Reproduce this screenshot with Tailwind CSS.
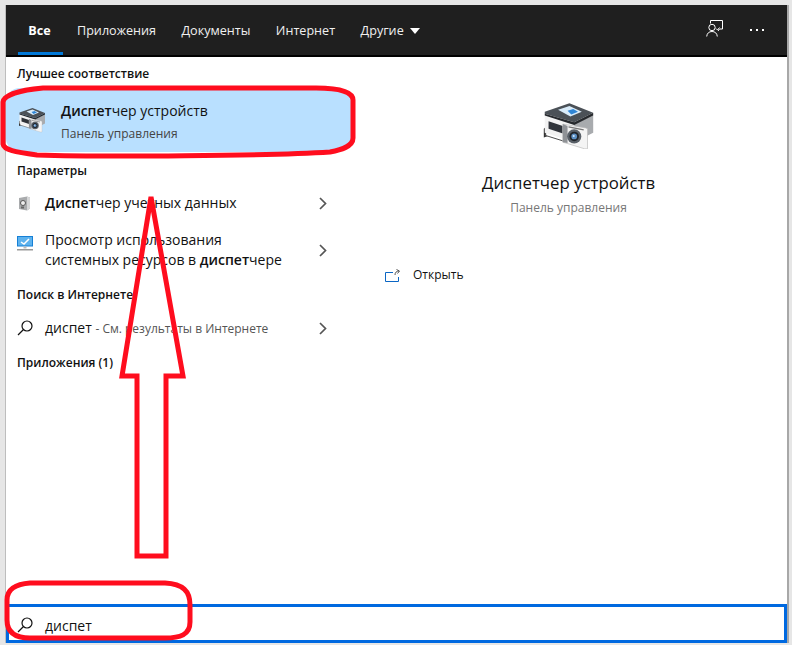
<!DOCTYPE html>
<html lang="ru"><head><meta charset="utf-8">
<script src="https://cdn.jsdelivr.net/npm/@tailwindcss/browser@4"></script>
</head>
<body class="m-0 bg-[#e6e6e6] font-['Open_Sans','Noto_Sans',sans-serif] text-[#111]">
<svg class="hidden"><defs>
<symbol id="dev" viewBox="0 0 60 48">
<path d="M4 27 L13 19 L13 33 L4 36 Z" fill="#333"/>
<path d="M6 28 L6 34 L38 44 L38 38 Z" fill="#fff" stroke="#444" stroke-width="1"/>
<path d="M5 12 L36 22 L36 41 L5 31 Z" fill="#f2f2f2"/>
<path d="M36 22 L56 13 L56 31 L36 41 Z" fill="#a8abae"/>
<path d="M9 19 L24 24 L24 32 L9 27 Z" fill="#30343a"/>
<path d="M5 9 L31 0 L56 10 L36 20 L5 11 Z" fill="#4b5157"/>
<path d="M5 11 L36 20 L56 10 L56 13 L36 23 L5 13 Z" fill="#26292d"/>
<path d="M19 7 L31 3 L44 9 L32 14 Z" fill="#d9ecfa"/>
<path d="M29 8 L35 6 L40 9 L33 12 Z" fill="#2f86d6"/>
<path d="M24 22 L48 26 L50 27 L50 48 L47 48 L24 41 Z" fill="#f4f4f4" stroke="#b9b9b9" stroke-width=".7"/>
<path d="M24 22 L29 24 L29 42 L24 41 Z" fill="#8f9296"/>
<circle cx="36" cy="35" r="7.500" fill="#596068"/>
<circle cx="36" cy="35" r="5" fill="#20242a"/>
<circle cx="36" cy="35" r="3" fill="#5b8fc4"/>
<circle cx="35.500" cy="34.500" r="1.100" fill="#d7e8f7"/>
<path d="M30 25 L46 28" stroke="#777" stroke-width="1.400"/>
</symbol>
</defs></svg>

<div class="relative h-[645px] w-[792px] overflow-hidden pt-[5px] pl-[5px] pr-[2px]">
  <div class="flex h-[638px] w-[784px] flex-col border-l border-r-2 border-l-[#bdbdbd] border-r-[#a8a8a8] bg-white">
    <header class="flex h-[52px] shrink-0 items-stretch border-b-2 border-b-black bg-[#1f1f1f] pl-[12px] pr-[23px] text-[12.6px] text-[#f0f0f0]">
      <div class="flex w-[45px] items-center justify-center border-b-[3px] border-[#0078d7] pt-[6px] pr-[2px] font-bold text-white">Все</div>
      <div class="flex items-center gap-[25.5px] pt-[3px] pl-[14px]">
        <span>Приложения</span><span>Документы</span><span>Интернет</span>
        <span class="flex items-center gap-[6px]">Другие
          <svg width="10" height="6" viewBox="0 0 10 6"><path d="M0 0h10L5 6z" fill="#fff"/></svg></span>
      </div>
      <div class="ml-auto flex items-center gap-[27px]">
        <svg class="-mt-[3px]" width="17" height="17" viewBox="0 0 17 17" fill="none" stroke="#fff" stroke-width="1"><path d="M4.500 3.500V.5h12v8.500h-3l-1.500 2"/><circle cx="6" cy="7.500" r="3.200"/><path d="M.7 16.500c.3-3.300 2.400-5 5.300-5s5 1.700 5.300 5"/><path d="M10 8.500l1.500 1.500 2-2.500"/></svg>
        <span class="flex gap-[4px]"><i class="size-[2px] bg-white"></i><i class="size-[2px] bg-white"></i><i class="size-[2px] bg-white"></i></span>
      </div>
    </header>

    <div class="flex min-h-0 flex-1">
      <div class="w-[345px] shrink-0">
        <h2 class="mt-[8px] pl-[11px] text-[12px] leading-[18px] font-semibold">Лучшее соответствие</h2>
        <div class="mt-[5px] flex h-[64px] items-center gap-[14px] rounded-[14px] bg-[#b9e0ff] pl-[11px]">
          <svg class="h-[30px] w-[30px]"><use href="#dev"/></svg>
          <div class="pt-[3px]">
            <div class="text-[14px] leading-[20px] text-[#111]"><b class="font-semibold">Диспет</b>чер устройств</div>
            <div class="mt-[4px] text-[12px] leading-[18px] text-[#444]">Панель управления</div>
          </div>
        </div>
        <h2 class="mt-[10px] pl-[11px] text-[12px] leading-[18px] font-semibold">Параметры</h2>
        <div class="mt-[9px] flex h-[28px] items-center pl-[12px] pr-[24px]">
          <svg class="mr-[14px] shrink-0" width="13" height="15" viewBox="0 0 13 15"><path d="M1 2l8-1.500 3 1v11l-3 2-8-1.500z" fill="#a9abad"/><path d="M9 .5l3 1v11l-3 2z" fill="#d6d7d8"/><circle cx="5" cy="7" r="2.500" fill="#eee" stroke="#555"/><rect x="3" y="10.500" width="3" height="2" fill="#666"/></svg>
          <span class="flex-1 text-[14px] leading-[20px]"><b class="font-semibold">Диспет</b>чер учетных данных</span>
          <svg width="8" height="13" viewBox="0 0 8 13" fill="none" stroke="#555" stroke-width="1.700"><path d="M1 1l5.500 5.500L1 12"/></svg>
        </div>
        <div class="mt-[11px] flex h-[44px] items-center pl-[11px] pr-[24px]">
          <svg class="mr-[12px] -mt-[14px] shrink-0" width="16" height="15" viewBox="0 0 16 15"><rect x="0" y="0" width="16" height="10.500" fill="#1680d6"/><rect x="1" y="1" width="14" height="8.500" fill="#5db2ee"/><path d="M4 6l3 2 5-5" stroke="#fff" stroke-width="1.500" fill="none"/><rect x="6.500" y="10.500" width="3" height="2" fill="#bbb"/><rect x="0" y="13" width="16" height="1.500" fill="#999"/></svg>
          <span class="flex-1 text-[14px] leading-[20px]">Просмотр использования<br>системных ресурсов в <b class="font-semibold">диспет</b>чере</span>
          <svg width="8" height="13" viewBox="0 0 8 13" fill="none" stroke="#555" stroke-width="1.700"><path d="M1 1l5.500 5.500L1 12"/></svg>
        </div>
        <h2 class="mt-[14px] pl-[11px] text-[12px] leading-[18px] font-semibold">Поиск в Интернете</h2>
        <div class="mt-[10px] flex h-[28px] items-center pl-[11px] pr-[24px]">
          <svg class="mr-[12px] shrink-0" width="16" height="16" viewBox="0 0 16 16" fill="none" stroke="#111" stroke-width="1.200"><circle cx="10" cy="6" r="5"/><path d="M6.500 9.500L1 15"/></svg>
          <span class="flex-1 text-[14px] leading-[20px]">диспет <span class="text-[12px] text-[#555]">- См. результаты в Интернете</span></span>
          <svg width="8" height="13" viewBox="0 0 8 13" fill="none" stroke="#555" stroke-width="1.700"><path d="M1 1l5.500 5.500L1 12"/></svg>
        </div>
        <h2 class="mt-[12px] pl-[11px] text-[12px] leading-[18px] font-semibold">Приложения (1)</h2>
      </div>

      <div class="min-w-0 flex-1 pl-[34px]">
        <div class="flex flex-col items-center pr-[35px] pt-[46px]">
          <svg class="h-[46px] w-[57px]"><use href="#dev"/></svg>
          <div class="mt-[21px] text-[16.8px] leading-[26px] text-[#111]">Диспетчер устройств</div>
          <div class="mt-[3px] text-[12px] leading-[18px] text-[#777]">Панель управления</div>
        </div>
        <div class="mt-[49px] flex items-center gap-[13px] text-[12px] leading-[18px]">
          <svg width="15" height="13" viewBox="0 0 15 13" fill="none" stroke="#0b66c4" stroke-width="1"><path d="M8 3.500H.5v9h13V8"/><path d="M10 6c0-2.500 1.500-4 4-4M11.500.5L14.500 2l-2 2.500" stroke="#555"/></svg>
          <span>Открыть</span>
        </div>
      </div>
    </div>

    <div class="flex h-[39px] shrink-0 items-center border-[3px] border-[#0069e0] pl-[8px] pt-[3px]">
      <svg class="mr-[12px] shrink-0" width="16" height="16" viewBox="0 0 16 16" fill="none" stroke="#111" stroke-width="1.200"><circle cx="10" cy="6" r="5"/><path d="M6.500 9.500L1 15"/></svg>
      <span class="text-[14px]">диспет</span>
    </div>
  </div>

  <svg class="pointer-events-none absolute top-0 left-0" width="792" height="645" fill="none" stroke="#ff0d1e" stroke-width="5" stroke-linejoin="miter">
    <path d="M43 88 H316 C340 88 353 92 353 100 V138 C353 147 340 150 330 152 C270 156 100 157 37 155 C15 152 4 150 3 144 V102 C4 95 20 90 43 88 Z"/>
    <path d="M151 197 L183 376 L166 376 L166 556 L137 556 L137 376 L122 376 Z"/>
    <path d="M30 583 H165 C183 584 190 591 190 605 V622 C190 635 180 638 165 638 H30 C15 638 7 632 7 620 V600 C7 590 15 584 30 583 Z"/>
  </svg>
</div>
</body></html>
